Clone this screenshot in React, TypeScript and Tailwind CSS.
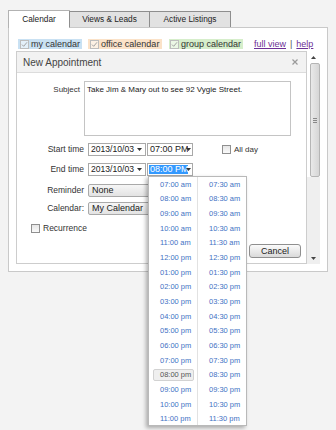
import React from 'react';

// half-hour slots shown in the end-time picker
const slots = Array.from({ length: 17 }, (_, i) => {
  const h24 = i + 7;
  const h = h24 > 12 ? h24 - 12 : h24;
  const hh = String(h).padStart(2, '0');
  const ap = h24 < 12 ? 'am' : 'pm';
  return { full: `${hh}:00 ${ap}`, half: `${hh}:30 ${ap}` };
});

function TickBox() {
  return (
    <span className="w-[9px] h-[9px] border border-[#bdbdbd] bg-white/50 flex items-center justify-center shrink-0">
      <svg width="7" height="7" viewBox="0 0 7 7">
        <path d="M1 3.6 L2.7 5.3 L6 1.3" stroke="#a3a3a3" strokeWidth="1" fill="none" />
      </svg>
    </span>
  );
}

function Arrow() {
  return (
    <svg width="5" height="3" viewBox="0 0 5 3" className="shrink-0">
      <path d="M0 0 H5 L2.5 3 Z" fill="#333" />
    </svg>
  );
}

function CheckBox() {
  return (
    <span className="w-[9px] h-[9px] border border-[#8f8f8f] bg-gradient-to-b from-[#e6e6e6] to-[#fafafa] shrink-0" />
  );
}

function Label({ children }: { children: React.ReactNode }) {
  return (
    <div className="w-[71px] pr-[4px] text-right text-[8.5px] text-[#333] leading-none shrink-0">
      {children}
    </div>
  );
}

function DateSelect() {
  return (
    <div className="w-[58px] h-[13px] border border-[#a9a9a9] bg-white flex items-center justify-between pl-[2px] pr-[3px] text-[8.6px] text-[#222] leading-none">
      <span>2013/10/03</span>
      <Arrow />
    </div>
  );
}

function TimeSelect({ value, active }: { value: string; active?: boolean }) {
  return (
    <div className="relative w-[46px] h-[13px] border border-[#a9a9a9] bg-white flex items-center pl-[1px] text-[9px] leading-none">
      <div className="w-[39px] overflow-hidden whitespace-nowrap">
        {active ? (
          <span className="bg-[#3399ff] text-white px-[1px] py-[1px]">{value}</span>
        ) : (
          <span className="text-[#222] px-[1px]">{value}</span>
        )}
      </div>
      <span className="absolute right-[1px] top-[4px]">
        <Arrow />
      </span>
    </div>
  );
}

function TimeList() {
  return (
    <div className="absolute top-full left-[1px] w-[99px] h-[250px] bg-white border border-[#b9b9b9] shadow-[-2px_2px_4px_rgba(0,0,0,0.3)] flex z-20 overflow-hidden">
      <div className="w-[49px] border-r border-[#e2e2e2] flex flex-col">
        {slots.map((s) => (
          <div key={s.full} className="h-[14.67px] pl-[4px] flex items-center shrink-0">
            {s.full === '08:00 pm' ? (
              <span className="w-[41px] h-[12px] pl-[6px] flex items-center rounded-[2px] border border-[#d2d2d2] bg-[#efefef] text-[#555] text-[7.5px]">
                {s.full}
              </span>
            ) : (
              <span className="w-[41px] h-[12px] pl-[7px] flex items-center text-[#4272c4] text-[7.5px]">
                {s.full}
              </span>
            )}
          </div>
        ))}
      </div>
      <div className="flex-1 flex flex-col">
        {slots.map((s) => (
          <div key={s.half} className="h-[14.67px] pl-[11px] flex items-center shrink-0 text-[#4272c4] text-[7.5px]">
            {s.half}
          </div>
        ))}
      </div>
    </div>
  );
}

export default function App() {
  return (
    <div className="w-[336px] h-[430px] bg-[#f3f3f3] pl-[8px] pt-[10px] overflow-hidden font-['Liberation_Sans',Arial,sans-serif]">
      {/* Tabs */}
      <div className="flex items-end h-[17px] relative z-10 text-[8.3px] text-[#222]">
        <div className="w-[62px] h-[18px] -mb-px bg-white border border-b-0 border-[#b2b2b2] flex items-center justify-center pb-[1px]">
          Calendar
        </div>
        <div className="w-[81px] h-[16px] -ml-px bg-[#e2e2e2] border border-b-0 border-[#8e8e8e] flex items-center justify-center">
          Views &amp; Leads
        </div>
        <div className="w-[82px] h-[16px] -ml-px bg-[#e2e2e2] border border-b-0 border-[#8e8e8e] flex items-center justify-center">
          Active Listings
        </div>
      </div>

      {/* Panel */}
      <div className="w-[320px] h-[245px] bg-white border border-[#c9c9c9] pt-[11px] pl-[9px]">
        {/* Calendar legend */}
        <div className="flex items-center h-[10px] text-[9px] leading-none">
          <div className="h-[10px] w-[64px] bg-[#c9e1f3] flex items-center pl-[2px] gap-[2px] text-[#333]">
            <TickBox />
            <span>my calendar</span>
          </div>
          <div className="h-[10px] w-[74px] ml-[6px] bg-[#fbe2c8] flex items-center pl-[2px] gap-[2px] text-[#333]">
            <TickBox />
            <span>office calendar</span>
          </div>
          <div className="h-[10px] w-[74px] ml-[7px] bg-[#d6eecb] flex items-center pl-[1px] gap-[2px] text-[#333]">
            <TickBox />
            <span>group calendar</span>
          </div>
          <a className="ml-[11px] text-[#6d2f96] underline">full view</a>
          <span className="mx-[4px] text-[#555]">|</span>
          <a className="text-[#6d2f96] underline">help</a>
        </div>

        {/* Dialog + scroll bar */}
        <div className="mt-[2px] ml-[-2px] w-[304px] h-[213px] flex">
          <div className="w-[291px] h-full border border-[#cdcdcd] flex flex-col">
            <div className="h-[21px] bg-[#f2f2f2] border-b border-[#dcdcdc] flex items-center justify-between pl-[6px] pr-[8px] shrink-0">
              <span className="text-[10px] text-[#444]">New Appointment</span>
              <svg width="6" height="6" viewBox="0 0 6 6">
                <path d="M0.5 0.5 L5.5 5.5 M5.5 0.5 L0.5 5.5" stroke="#9a9a9a" strokeWidth="1.2" />
              </svg>
            </div>

            <div className="flex-1 bg-white flex flex-col">
              {/* Subject */}
              <div className="flex items-start mt-[8px]">
                <div className="w-[67px] pr-[4px] pt-[5px] text-right text-[8px] text-[#333] leading-none shrink-0">
                  Subject
                </div>
                <div className="w-[207px] h-[55px] border border-[#c4c4c4] pl-[2px] pt-[4px] text-[8px] text-[#222] leading-none">
                  Take Jim &amp; Mary out to see 92 Vygie Street.
                </div>
              </div>

              {/* Start time */}
              <div className="flex items-center mt-[7px] h-[13px]">
                <Label>Start time</Label>
                <DateSelect />
                <div className="ml-[1px]">
                  <TimeSelect value="07:00 PM" />
                </div>
                <div className="ml-[29px] flex items-center gap-[3px] text-[8px] text-[#333] leading-none">
                  <CheckBox />
                  <span>All day</span>
                </div>
              </div>

              {/* End time */}
              <div className="flex items-center mt-[7px] h-[13px] relative z-20">
                <Label>End time</Label>
                <DateSelect />
                <div className="ml-[1px] relative">
                  <TimeSelect value="08:00 PM" active />
                  <TimeList />
                </div>
              </div>

              {/* Reminder */}
              <div className="flex items-center mt-[8px] h-[13px]">
                <Label>Reminder</Label>
                <div className="w-[150px] h-[13px] rounded-[2px] border border-[#a9a9a9] bg-gradient-to-b from-[#f6f6f6] to-[#e3e3e3] flex items-center pl-[3px] text-[9px] text-[#222] leading-none">
                  None
                </div>
              </div>

              {/* Calendar */}
              <div className="flex items-center mt-[5px] h-[13px]">
                <Label>Calendar:</Label>
                <div className="w-[150px] h-[13px] rounded-[2px] border border-[#a9a9a9] bg-gradient-to-b from-[#f6f6f6] to-[#e3e3e3] flex items-center pl-[3px] text-[9px] text-[#222] leading-none">
                  My Calendar
                </div>
              </div>

              {/* Recurrence */}
              <div className="flex items-center mt-[9px] ml-[14px] gap-[3px] text-[8.5px] text-[#333] leading-none">
                <CheckBox />
                <span>Recurrence</span>
              </div>

              <div className="flex justify-end mt-[11px] pr-[5px]">
                <button className="w-[52px] h-[14px] rounded-[3px] border border-[#8f8f8f] bg-gradient-to-b from-[#fbfbfb] to-[#dadada] text-[9px] text-[#222] leading-none">
                  Cancel
                </button>
              </div>
            </div>
          </div>

          {/* Scroll bar */}
          <div className="w-[13px] h-full flex flex-col">
            <div className="h-[12px] flex items-center justify-center bg-white">
              <svg width="5" height="3" viewBox="0 0 5 3">
                <path d="M0 3 H5 L2.5 0 Z" fill="#444" />
              </svg>
            </div>
            <div className="ml-[3px] w-[10px] h-[114px] rounded-[2px] border border-[#b5b5b5] bg-gradient-to-r from-[#e9e9e9] to-[#d6d6d6] flex items-center justify-center">
              <svg width="4" height="5" viewBox="0 0 4 5">
                <path d="M0 0.5 H4 M0 2.5 H4 M0 4.5 H4" stroke="#888" strokeWidth="1" />
              </svg>
            </div>
            <div className="flex-1 bg-[#efefef]" />
            <div className="h-[11px] flex items-center justify-center bg-[#efefef]">
              <svg width="5" height="3" viewBox="0 0 5 3">
                <path d="M0 0 H5 L2.5 3 Z" fill="#444" />
              </svg>
            </div>
          </div>
        </div>
      </div>
    </div>
  );
}
